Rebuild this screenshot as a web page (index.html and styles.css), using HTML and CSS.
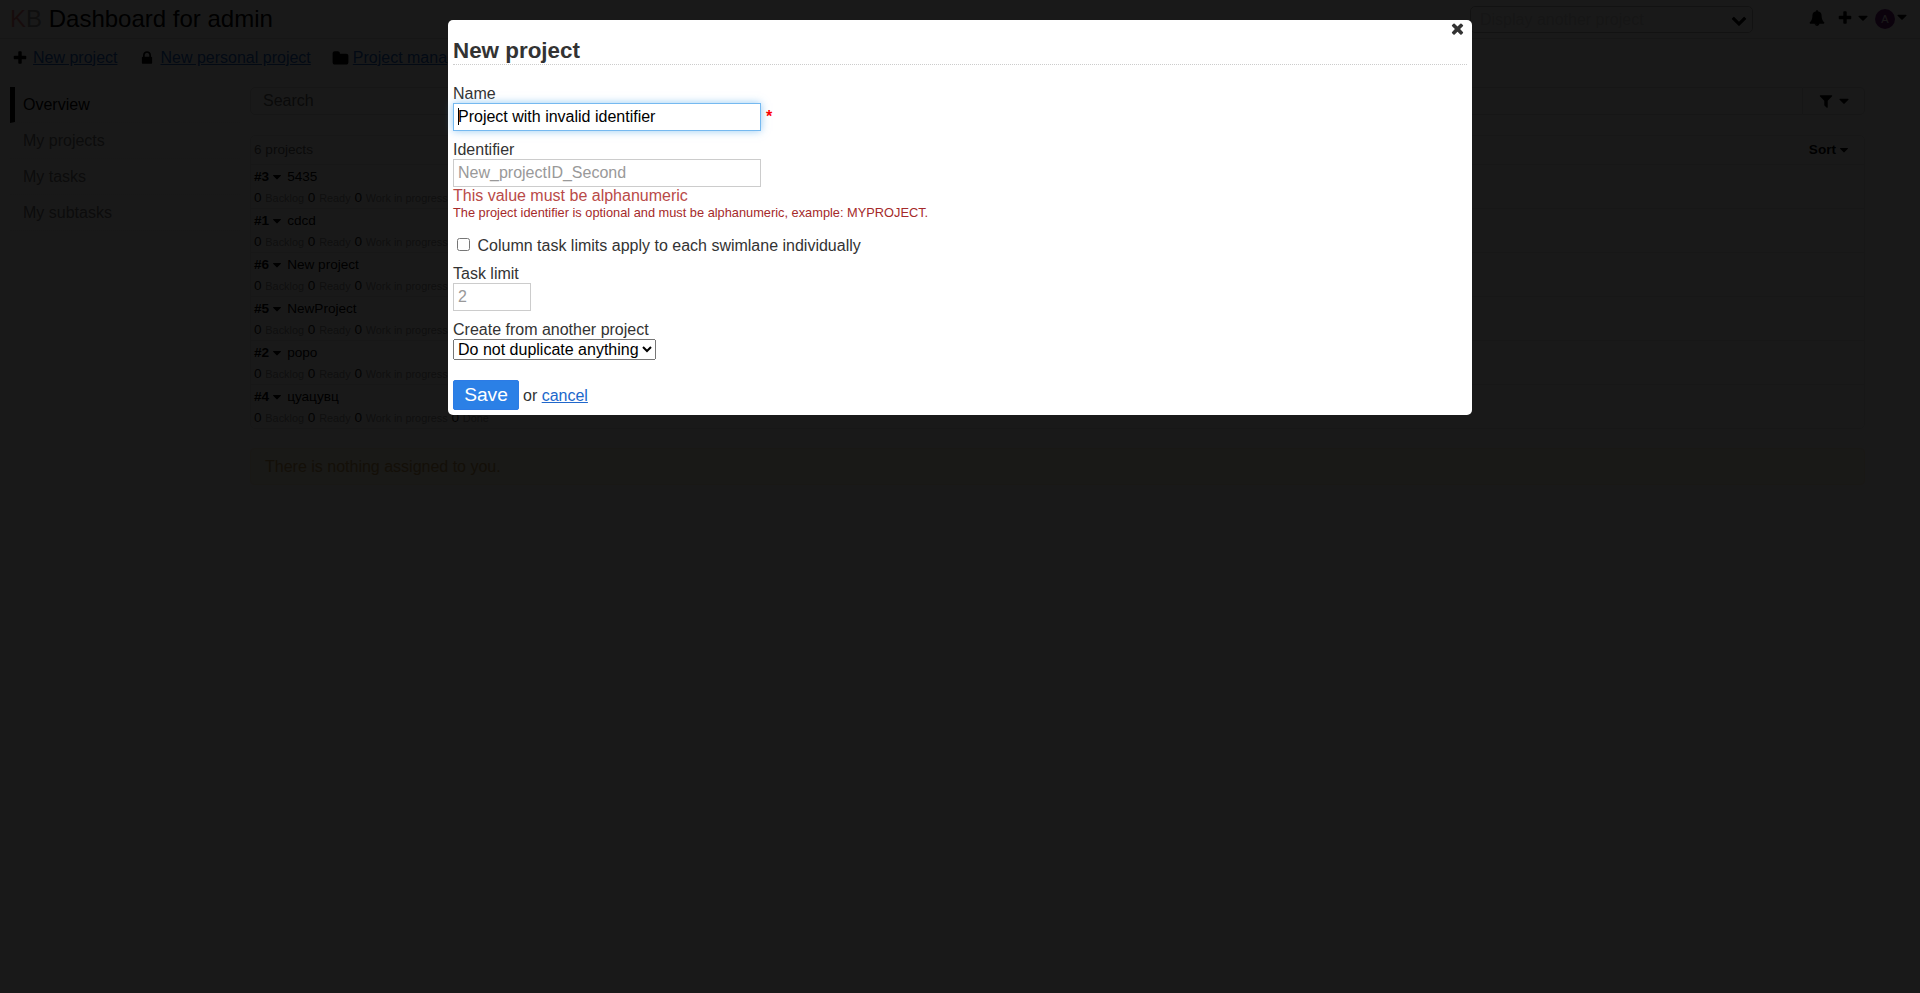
FILE: index.html
```
<!DOCTYPE html>
<html lang="en">
<head>
<meta charset="utf-8">
<title>Dashboard for admin</title>
<link rel="stylesheet" href="styles.css">
</head>
<body>
<svg width="0" height="0" class="defs">
  <symbol id="plus" viewBox="0 0 1792 1792"><path d="M1600 736v192q0 40-28 68t-68 28h-416v416q0 40-28 68t-68 28h-192q-40 0-68-28t-28-68v-416h-416q-40 0-68-28t-28-68v-192q0-40 28-68t68-28h416v-416q0-40 28-68t68-28h192q40 0 68 28t28 68v416h416q40 0 68 28t28 68z"/></symbol>
  <symbol id="caret" viewBox="0 0 1792 1792"><path d="M1408 704q0 26-19 45l-448 448q-19 19-45 19t-45-19l-448-448q-19-19-19-45t19-45 45-19h896q26 0 45 19t19 45z"/></symbol>
  <symbol id="lock" viewBox="0 0 1792 1792"><path d="M640 768h512v-192q0-106-75-181t-181-75-181 75-75 181v192zm832 96v576q0 40-28 68t-68 28h-960q-40 0-68-28t-28-68v-576q0-40 28-68t68-28h32v-192q0-184 132-316t316-132 316 132 132 316v192h32q40 0 68 28t28 68z"/></symbol>
  <symbol id="folder" viewBox="0 0 1792 1792"><path d="M1728 608v704q0 92-66 158t-158 66h-1216q-92 0-158-66t-66-158v-960q0-92 66-158t158-66h320q92 0 158 66t66 158v32h672q92 0 158 66t66 158z"/></symbol>
  <symbol id="filter" viewBox="0 0 1792 1792"><path d="M1595 295q17 41-14 70l-493 493v742q0 42-39 59-13 5-25 5-27 0-45-19l-256-256q-19-19-19-45v-486l-493-493q-31-29-14-70 17-39 59-39h1280q42 0 59 39z"/></symbol>
  <symbol id="bell" viewBox="0 0 1792 1792"><path d="M912 1696q0-16-16-16-59 0-101.5-42.5t-42.5-101.5q0-16-16-16t-16 16q0 73 51.5 124.5t124.5 51.5q16 0 16-16zm816-288q0 52-38 90t-90 38h-448q0 106-75 181t-181 75-181-75-75-181h-448q-52 0-90-38t-38-90q50-42 91-88t85-119.5 74.5-158.5 50-206 19.5-260q0-152 117-282.5t307-158.5q-8-19-8-39 0-40 28-68t68-28 68 28 28 68q0 20-8 39 190 28 307 158.5t117 282.5q0 139 19.5 260t50 206 74.5 158.5 85 119.5 91 88z"/></symbol>
  <symbol id="times" viewBox="0 0 1792 1792"><path d="M1490 1322q0 40-28 68l-136 136q-28 28-68 28t-68-28l-294-294-294 294q-28 28-68 28t-68-28l-136-136q-28-28-28-68t28-68l294-294-294-294q-28-28-28-68t28-68l136-136q28-28 68-28t68 28l294 294 294-294q28-28 68-28t68 28l136 136q28 28 28 68t-28 68l-294 294 294 294q28 28 28 68z"/></symbol>
  <symbol id="chevron" viewBox="0 0 1792 1792"><path d="M1683 808l-742 741q-19 19-45 19t-45-19l-742-741q-19-19-19-45.5t19-45.5l166-165q19-19 45-19t45 19l531 531 531-531q19-19 45-19t45 19l166 165q19 19 19 45.5t-19 45.5z"/></symbol>
</svg>

<header class="header">
  <h1 class="title"><span class="logo"><span class="logo-k">K</span>B</span> Dashboard for admin</h1>
  <div class="board-select"><span>Display another project</span><svg class="icon"><use href="#chevron"/></svg></div>
  <div class="header-menu">
    <svg class="icon bell"><use href="#bell"/></svg>
    <svg class="icon add"><use href="#plus"/></svg>
    <svg class="icon add-caret"><use href="#caret"/></svg>
    <span class="avatar">A</span>
    <svg class="icon user-caret"><use href="#caret"/></svg>
  </div>
</header>

<nav class="actions">
  <svg class="icon"><use href="#plus"/></svg><a class="act-new">New project</a>
  <svg class="icon"><use href="#lock"/></svg><a class="act-personal">New personal project</a>
  <svg class="icon icon-folder"><use href="#folder"/></svg><a>Project management</a>
</nav>

<main class="page">
  <ul class="sidebar">
    <li class="active">Overview</li>
    <li>My projects</li>
    <li>My tasks</li>
    <li>My subtasks</li>
  </ul>
  <section class="content">
    <div class="search">
      <div class="search-input">Search</div>
      <div class="search-filter"><svg class="icon"><use href="#filter"/></svg><svg class="icon"><use href="#caret"/></svg></div>
    </div>
    <div class="table">
      <div class="table-header"><span>6 projects</span><span class="sort">Sort<svg class="icon-s"><use href="#caret"/></svg></span></div>
      <div class="row"><div class="row-title"><b>#3</b><svg class="icon-s"><use href="#caret"/></svg><span>5435</span></div><div class="row-stats">0 <small>Backlog</small> 0 <small>Ready</small> 0 <small>Work in progress</small> 0 <small>Done</small></div></div>
      <div class="row"><div class="row-title"><b>#1</b><svg class="icon-s"><use href="#caret"/></svg><span>cdcd</span></div><div class="row-stats">0 <small>Backlog</small> 0 <small>Ready</small> 0 <small>Work in progress</small> 0 <small>Done</small></div></div>
      <div class="row"><div class="row-title"><b>#6</b><svg class="icon-s"><use href="#caret"/></svg><span>New project</span></div><div class="row-stats">0 <small>Backlog</small> 0 <small>Ready</small> 0 <small>Work in progress</small> 0 <small>Done</small></div></div>
      <div class="row"><div class="row-title"><b>#5</b><svg class="icon-s"><use href="#caret"/></svg><span>NewProject</span></div><div class="row-stats">0 <small>Backlog</small> 0 <small>Ready</small> 0 <small>Work in progress</small> 0 <small>Done</small></div></div>
      <div class="row"><div class="row-title"><b>#2</b><svg class="icon-s"><use href="#caret"/></svg><span>popo</span></div><div class="row-stats">0 <small>Backlog</small> 0 <small>Ready</small> 0 <small>Work in progress</small> 0 <small>Done</small></div></div>
      <div class="row"><div class="row-title"><b>#4</b><svg class="icon-s"><use href="#caret"/></svg><span>цуацувц</span></div><div class="row-stats">0 <small>Backlog</small> 0 <small>Ready</small> 0 <small>Work in progress</small> 0 <small>Done</small></div></div>
    </div>
    <p class="alert">There is nothing assigned to you.</p>
  </section>
</main>

<div class="overlay">
  <form class="modal">
    <svg class="close"><use href="#times"/></svg>
    <h2>New project</h2>
    <label class="first">Name</label>
    <div class="field"><span class="focus-wrap"><input class="input focused" type="text" value="Project with invalid identifier"><i class="cursor"></i></span><span class="required">*</span></div>
    <label>Identifier</label>
    <div class="field"><input class="input" type="text" value="New_projectID_Second"></div>
    <div class="error">This value must be alphanumeric</div>
    <p class="help">The project identifier is optional and must be alphanumeric, example: MYPROJECT.</p>
    <div class="check"><input type="checkbox"><span>Column task limits apply to each swimlane individually</span></div>
    <label class="limit">Task limit</label>
    <div class="field"><input class="input short" type="text" value="2"></div>
    <label>Create from another project</label>
    <select><option>Do not duplicate anything</option></select>
    <div class="form-actions"><button type="button">Save</button><span>or <a>cancel</a></span></div>
  </form>
</div>
</body>
</html>
```

FILE: styles.css
```
* { box-sizing: border-box; }
body { margin: 0; height: 993px; overflow: hidden; background: #fff; color: #333; font: 16px/18px "Liberation Sans", Arial, sans-serif; }
.defs { display: none; }
.icon { width: 16px; height: 16px; flex: none; fill: #000; }
.icon-s { width: 14px; height: 14px; flex: none; fill: #000; }

.header { display: flex; align-items: flex-start; height: 39px; padding: 5px 10px 0; border-bottom: 1px solid #dedede; }
.title { flex: 1; margin: 0; font-size: 24px; line-height: 28px; font-weight: 400; color: #000; }
.logo { opacity: .5; color: #333; }
.logo-k { color: #d40000; }
.board-select { display: flex; align-items: center; justify-content: space-between; width: 283px; height: 27px; margin-top: 1px; padding: 0 5px 0 9px; border: 1px solid #bbb; border-radius: 5px; color: #d9d9d9; }
.header-menu { display: flex; width: 157px; height: 27px; }
.bell { margin: 5px 0 0 56px; }
.add { margin: 5px 0 0 12px; }
.add-caret { margin: 5px 0 0 2px; }
.avatar { width: 20px; height: 20px; margin: 4px 0 0 4px; border-radius: 50%; background: #72167f; color: #fff; font-size: 11px; line-height: 20px; text-align: center; }
.user-caret { margin: 4px 0 0 -1px; }

.actions { display: flex; align-items: center; height: 18px; margin-top: 10px; padding-left: 12px; white-space: nowrap; }
.actions a { margin-left: 5px; color: #2067cb; text-decoration: underline; }
.actions .act-new { margin-right: 22px; }
.actions .act-personal { margin-right: 21px; }
.actions .icon-folder { width: 17px; height: 17px; }
.actions .icon-folder + a { margin-left: 4px; }

.page { display: flex; padding: 20px 55px 0 10px; }
.sidebar { width: 230px; margin: 0 10px 0 0; padding: 0; list-style: none; }
.sidebar li { height: 36px; padding-left: 13px; line-height: 35px; border-bottom: 1px dotted #efefef; color: #777; }
.sidebar .active { border-left: 5px solid #000; padding-left: 8px; color: #000; }
.content { flex: 1; }
.search { display: flex; height: 28px; }
.search-input { flex: 1; padding-left: 12px; line-height: 26px; border: 1px solid #dedede; border-radius: 5px 0 0 5px; color: #666; }
.search-filter { display: flex; align-items: center; gap: 2px; width: 62px; padding-left: 15px; border: 1px solid #dedede; border-left: 0; border-radius: 0 5px 5px 0; background: #fbfbfb; }
.table { margin-top: 20px; border: 1px solid #e5e5e5; border-radius: 5px; font-size: 13.6px; }
.table-header { display: flex; align-items: center; justify-content: space-between; height: 28px; padding: 0 13px 0 3px; color: #666; }
.sort { display: flex; align-items: center; gap: 1px; font-weight: 700; color: #000; }
.row { height: 44px; padding-left: 3px; border-top: 1px solid #e5e5e5; }
.row-title { display: flex; align-items: center; height: 22px; padding-top: 2px; color: #000; }
.row-title span { margin-left: 3px; }
.row-title .icon-s { margin: 0 0 1px 1px; }
.row-stats { height: 21px; line-height: 21px; color: #222; }
.row-stats small { font-size: 10.88px; color: #999; }
.alert { margin: 19px 0 0; height: 37px; padding-left: 14px; line-height: 35px; border: 1px solid #fbeed5; border-radius: 4px; background: #fcf8e3; color: #c09853; }

.overlay { position: fixed; inset: 0; padding-top: 20px; background: rgba(0, 0, 0, .9); }
.modal { position: relative; width: 1024px; height: 395px; margin: 0 auto; padding: 17px 5px 0; border-radius: 5px; background: #fff; }
.close { position: absolute; right: 6px; top: 0; width: 17px; height: 17px; fill: #333; }
.modal h2 { height: 28px; margin: 0; font-size: 22.4px; line-height: 27px; border-bottom: 1px dotted #ccc; }
.modal label { display: block; height: 18px; margin-top: 10px; }
.modal .first { margin-top: 20px; }
.field { display: flex; height: 28px; }
.input { width: 308px; height: 28px; margin: 0; padding: 0 4px 1px; border: 1px solid #ccc; border-radius: 0; outline: 0; background: #fff; color: #999; font: 16px "Liberation Sans", Arial, sans-serif; }
.short { width: 78px; }
.focused { color: #000; border-color: rgba(82, 168, 236, .8); box-shadow: 0 0 8px rgba(82, 168, 236, .6); }
.focus-wrap { position: relative; }
.cursor { position: absolute; left: 5px; top: 5px; width: 1px; height: 17px; background: #000; }
.required { margin: 5px 0 0 5px; color: red; font-weight: 700; }
.error { height: 18px; color: #b94a48; }
.help { height: 16px; margin: 0; font-size: 12.8px; line-height: 16px; color: #a52a2a; }
.check { display: flex; height: 18px; margin-top: 16px; }
.check input { width: 13px; height: 13px; margin: 1px 7.5px 0 4px; }
.modal .limit { margin-top: 10px; }
.modal select { display: block; height: 21px; margin: 0; padding: 0; font: 16px "Liberation Sans", Arial, sans-serif; color: #000; }
.form-actions { display: flex; align-items: center; margin-top: 20px; gap: 4px; }
.form-actions span { padding-top: 2px; }
.form-actions button { width: 66px; height: 30px; padding: 0; border: 1px solid #2c7be5; border-radius: 2px; background: #2b80e6; color: #fff; font: 19.2px "Liberation Sans", Arial, sans-serif; }
.form-actions a { color: #2067cb; text-decoration: underline; }
```
